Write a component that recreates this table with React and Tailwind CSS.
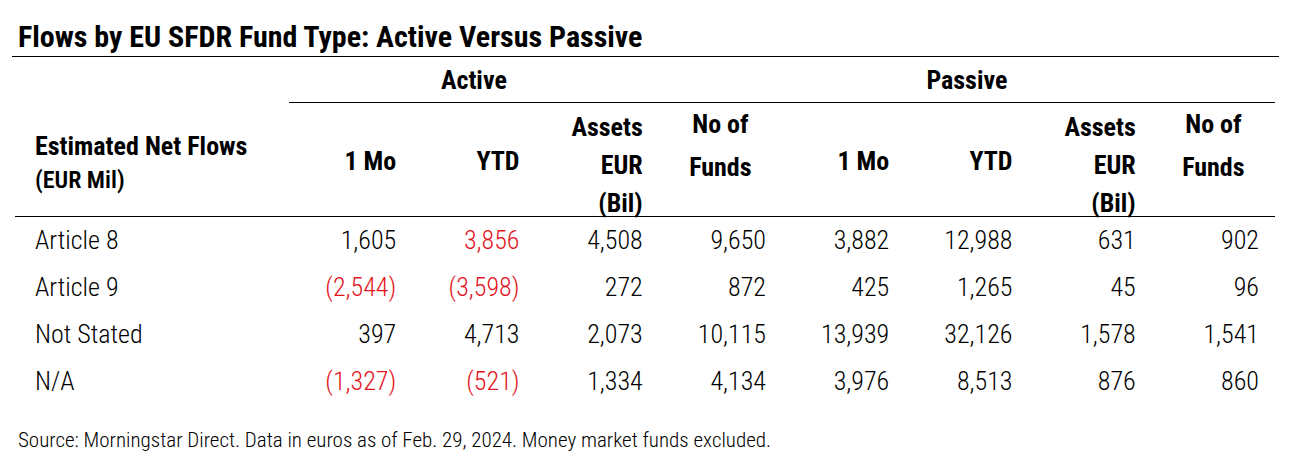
const rows = [
  { label: "Article 8", active: ["1,605", "3,856", "4,508", "9,650"], passive: ["3,882", "12,988", "631", "902"], red: [1] },
  { label: "Article 9", active: ["(2,544)", "(3,598)", "272", "872"], passive: ["425", "1,265", "45", "96"], red: [0, 1] },
  { label: "Not Stated", active: ["397", "4,713", "2,073", "10,115"], passive: ["13,939", "32,126", "1,578", "1,541"], red: [] },
  { label: "N/A", active: ["(1,327)", "(521)", "1,334", "4,134"], passive: ["3,976", "8,513", "876", "860"], red: [0, 1] },
];

const HeaderCols = () => (
  <>
    <div className="h-[114px] border-b border-black flex items-center justify-end pr-4 pt-[2px] leading-[34px]">1 Mo</div>
    <div className="h-[114px] border-b border-black flex items-center justify-end pr-4 pt-[2px] leading-[34px]">YTD</div>
    <div className="h-[114px] border-b border-black flex flex-col items-end pr-4 pt-[5px] leading-[38px]">
      <span>Assets</span>
      <span>EUR</span>
      <span>(Bil)</span>
    </div>
    <div className="h-[114px] border-b border-black flex flex-col items-center pt-0 leading-[43px]">
      <span>No of</span>
      <span>Funds</span>
    </div>
  </>
);

export default function App() {
  return (
    <div className="w-[1305px] h-[456px] bg-white text-black font-['Roboto_Condensed',sans-serif]">
      {/* TITLE */}
      <div className="ml-[12px] w-[1267px] pl-[6px] pt-[21px] pb-[4px] border-b border-black">
        <h1 className="text-[30px] leading-[31px] font-bold">
          Flows by EU SFDR Fund Type: Active Versus Passive
        </h1>
      </div>

      {/* TABLE */}
      <div className="ml-[15px] w-[1260px] grid grid-cols-[274px_repeat(8,1fr)]">
        {/* group row */}
        <div className="h-[46px]"></div>
        <div className="col-span-3 h-[46px] border-b border-black flex items-center justify-center text-[26px] font-bold pt-[2px]">
          Active
        </div>
        <div className="h-[46px] border-b border-black"></div>
        <div className="col-span-3 h-[46px] border-b border-black flex items-center justify-center text-[26px] font-bold pt-[2px]">
          Passive
        </div>
        <div className="h-[46px] border-b border-black"></div>

        {/* header row */}
        <div className="h-[114px] border-b border-black pl-[20px] pt-[26px] font-bold leading-[34px]">
          <div className="text-[26px]">Estimated Net Flows</div>
          <div className="text-[24px] font-semibold">(EUR Mil)</div>
        </div>
        <div className="contents text-[26px] font-bold">
          <HeaderCols />
          <HeaderCols />
        </div>

        {/* data rows */}
        {rows.map((row) => (
          <div key={row.label} className="contents text-[26px] font-light">
            <div className="h-[47px] flex items-center pl-[20px]">{row.label}</div>
            {row.active.map((v, i) => (
              <div
                key={"a" + i}
                className={
                  "h-[47px] flex items-center justify-end pr-4 " +
                  (row.red.includes(i) ? "text-[#e3141c]" : "")
                }
              >
                {v}
              </div>
            ))}
            {row.passive.map((v, i) => (
              <div key={"p" + i} className="h-[47px] flex items-center justify-end pr-4">
                {v}
              </div>
            ))}
          </div>
        ))}
      </div>

      {/* FOOTER */}
      <p className="mt-[23px] pl-[18px] text-[21px] leading-[24px] font-light">
        Source: Morningstar Direct. Data in euros as of Feb. 29, 2024. Money market funds excluded.
      </p>
    </div>
  );
}
